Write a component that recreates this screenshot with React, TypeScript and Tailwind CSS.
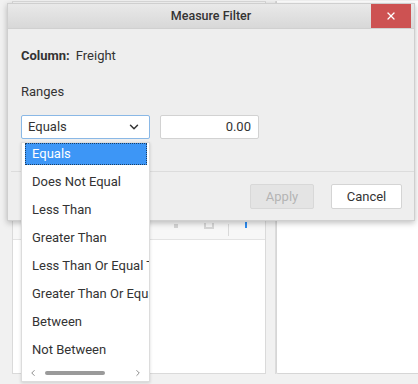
import { ChevronDown, ChevronLeft, ChevronRight, X } from 'lucide-react'

const options = [
  'Equals',
  'Does Not Equal',
  'Less Than',
  'Greater Than',
  'Less Than Or Equal To',
  'Greater Than Or Equal To',
  'Between',
  'Not Between',
]

export default function App() {
  return (
    <div
      className="relative w-[418px] h-[384px] overflow-hidden bg-[#f1f1f1] text-[13px] text-[#333]"
      style={{ fontFamily: 'Roboto, "Liberation Sans", sans-serif' }}
    >
      {/* Page behind the dialog */}
      <div className="flex h-[374px] pt-[1px]">
        <div className="w-[12px]" />
        <div className="w-[254px] flex flex-col border border-[#dadada] bg-white">
          <div className="flex-1 bg-[#f7f7f7]" />
          <div className="h-[18px] flex items-start justify-end pr-[13px] bg-[#f7f7f7] border-b border-[#e3e3e3]">
            <span className="mt-[2px] w-[4px] h-[4px] bg-[#d4d4d4]" />
            <span className="ml-[26px] mt-[1px] w-[10px] h-[6px] border-x-2 border-b-2 border-[#d6d6d6]" />
            <span className="ml-[14px] mt-[2px] w-px h-[12px] bg-[#d9d9d9]" />
            <span className="ml-[11px] relative w-[12px] h-[8px]">
              <span className="absolute left-[5px] top-0 w-[2px] h-[6px] bg-[#2d8cf0]" />
            </span>
          </div>
          <div className="h-[133px] bg-white" />
        </div>
        <div className="w-[10px] border-r border-[#dcdcdc]" />
        <div className="flex-1 bg-white border-l border-b border-[#d6d6d6] rounded-bl-[2px]" />
      </div>

      {/* Dialog */}
      <div className="absolute left-[7px] top-[3px] w-[408px] h-[218px] flex flex-col bg-[#eeeeee] border border-[#cfcfcf] shadow-[0_2px_6px_rgba(0,0,0,0.25)]">
        <div className="relative h-[25px] flex items-center justify-center bg-gradient-to-b from-[#e9e9e9] to-[#d8d8d8] border-b border-[#d0d0d0]">
          <span className="text-[12.5px] font-medium text-[#333]">Measure Filter</span>
          <div className="absolute right-[3px] top-0 w-[40px] h-[24px] flex items-center justify-center bg-[#cd5252]">
            <X size={12} strokeWidth={2.5} className="text-white" />
          </div>
        </div>

        <div className="pl-[13px] pt-[19px] leading-[16px]">
          <div>
            <span className="font-bold">Column:</span>
            <span className="ml-[6px]">Freight</span>
          </div>
          <div className="mt-[20px]">Ranges</div>
          <div className="mt-[15px] flex gap-[10px]">
            <div className="w-[129px] h-[24px] flex items-center justify-between pl-[6px] pr-[8px] bg-white border border-[#8ab8e6] rounded-[2px]">
              <span>Equals</span>
              <ChevronDown size={14} strokeWidth={2.5} className="text-[#333]" />
            </div>
            <div className="w-[99px] h-[24px] flex items-center justify-end pr-[7px] bg-white border border-[#d2d2d2] rounded-[2px]">
              0.00
            </div>
          </div>
        </div>

        <div className="mt-[32px] ml-[3px] h-px bg-[#dcdcdc]" />

        <div className="mt-[12px] flex justify-end gap-[17px] pr-[12px]">
          <div className="w-[64px] h-[25px] flex items-center justify-center bg-[#e4e4e4] border border-[#d8d8d8] rounded-[2px] text-[#b4b4b4]">
            Apply
          </div>
          <div className="w-[71px] h-[25px] flex items-center justify-center bg-white border border-[#d4d4d4] rounded-[2px] text-[#333]">
            Cancel
          </div>
        </div>
      </div>

      {/* Dropdown popup */}
      <div className="absolute left-[21px] top-[142px] w-[129px] h-[240px] flex flex-col bg-white border border-[#dcdcdc] shadow-[0_1px_3px_rgba(0,0,0,0.15)] overflow-hidden">
        <div className="-mt-[3px] flex-1">
          {options.map((o, i) => (
            <div key={o} className="relative h-[28px] flex items-center pl-[10px] whitespace-nowrap">
              {i === 0 && (
                <div className="absolute left-[3px] right-[2px] top-[3px] h-[22px] bg-[#3d96f6] border border-dotted border-[#1a3f66]" />
              )}
              <span className={i === 0 ? 'relative text-white' : 'relative'}>{o}</span>
            </div>
          ))}
        </div>
        <div className="h-[17px] flex items-center justify-between px-[6px] text-[#777]">
          <ChevronLeft size={10} strokeWidth={2} />
          <div className="flex-1 ml-[7px] mr-[28px] h-[4px] rounded-full bg-[#9a9a9a]" />
          <ChevronRight size={10} strokeWidth={2} />
        </div>
      </div>
    </div>
  )
}
